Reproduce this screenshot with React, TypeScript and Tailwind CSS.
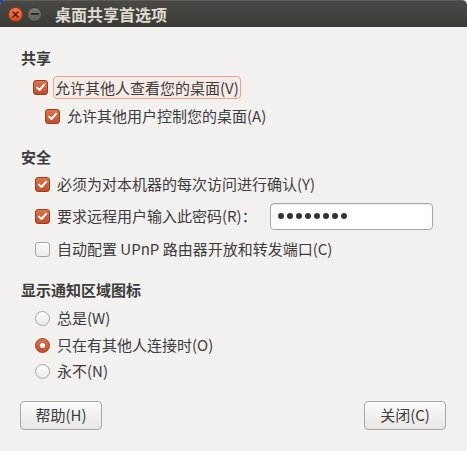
import React from "react";

const font = { fontFamily: '"Noto Sans CJK SC", "Noto Sans", sans-serif' };

function CheckBox({ checked }: { checked: boolean }) {
  if (!checked) {
    return (
      <span className="inline-block w-[15px] h-[15px] rounded-[3px] border border-[#a8a6a2] bg-gradient-to-b from-[#fdfdfc] to-[#eceae7] shrink-0" />
    );
  }
  return (
    <span className="inline-flex items-center justify-center w-[15px] h-[15px] rounded-[3px] border border-[#9a3e1f] bg-gradient-to-b from-[#dd7450] to-[#c04e2d] shrink-0">
      <svg width="11" height="11" viewBox="0 0 11 11">
        <path d="M2 5.6 L4.5 8 L9 2.8" fill="none" stroke="#fff" strokeWidth="2" strokeLinecap="round" strokeLinejoin="round" />
      </svg>
    </span>
  );
}

function Radio({ checked }: { checked: boolean }) {
  if (!checked) {
    return (
      <span className="inline-block w-[15px] h-[15px] rounded-full border border-[#a8a6a2] bg-gradient-to-b from-[#fdfdfc] to-[#eceae7] shrink-0" />
    );
  }
  return (
    <span className="inline-flex items-center justify-center w-[15px] h-[15px] rounded-full border border-[#9a3e1f] bg-gradient-to-b from-[#dd7450] to-[#c04e2d] shrink-0">
      <span className="w-[5px] h-[5px] rounded-full bg-white" />
    </span>
  );
}

export default function App() {
  return (
    <div style={font} className="w-[467px] h-[451px] bg-[#f2f1f0] text-[#3c3c3c] text-[15px] relative overflow-hidden">
      {/* title bar */}
      <div className="h-[27px] bg-gradient-to-b from-[#4a4944] to-[#3b3a36] border-t border-[#5d5c57] rounded-t-[5px] flex items-center">
        <div className="ml-[8px] w-[15px] h-[15px] rounded-full bg-gradient-to-b from-[#f47b55] to-[#dc4a1e] border border-[#8f3516] flex items-center justify-center">
          <svg width="7" height="7" viewBox="0 0 7 7">
            <path d="M1 1 L6 6 M6 1 L1 6" stroke="#3a1a10" strokeWidth="1.4" strokeLinecap="round" />
          </svg>
        </div>
        <div className="ml-[4px] w-[15px] h-[15px] rounded-full bg-gradient-to-b from-[#7d7c77] to-[#5e5d58] border border-[#3a3935] flex items-center justify-center">
          <span className="w-[8px] h-[1.5px] bg-[#2e2d2a]" />
        </div>
        <span className="ml-[13px] text-[16px] font-bold text-[#dfdbd2] leading-none">桌面共享首选项</span>
      </div>
      <div className="absolute left-0 top-0 w-[3px] h-[3px] bg-[#2a3fb0]" />

      <div className="pl-[21px] pr-[21px] flex flex-col">
        {/* 共享 */}
        <div className="mt-[21px] h-[20px] leading-[20px] font-bold">共享</div>
        <div className="mt-[7px] h-[24px] flex items-center pl-[12px]">
          <CheckBox checked />
          <span className="ml-[5px] h-[23px] leading-[21px] px-[1px] border border-[#e9a58a] bg-[#f6ebe6] rounded-[4px]">允许其他人查看您的桌面(V)</span>
        </div>
        <div className="mt-[5px] h-[24px] flex items-center pl-[24px]">
          <CheckBox checked />
          <span className="ml-[7px]">允许其他用户控制您的桌面(A)</span>
        </div>

        {/* 安全 */}
        <div className="mt-[19px] h-[20px] leading-[20px] font-bold">安全</div>
        <div className="mt-[5px] h-[24px] flex items-center pl-[14px]">
          <CheckBox checked />
          <span className="ml-[7px]">必须为对本机器的每次访问进行确认(Y)</span>
        </div>
        <div className="mt-[6px] h-[28px] flex items-center pl-[14px]">
          <CheckBox checked />
          <span className="ml-[7px]">要求远程用户输入此密码(R)：</span>
          <div className="ml-auto w-[163px] h-[27px] rounded-[4px] border border-[#a9a7a3] bg-white flex items-center pl-[7px] gap-[3px] shadow-[inset_0_1px_1px_rgba(0,0,0,0.08)] mr-[13px]">
            {Array.from({ length: 8 }).map((_, i) => (
              <span key={i} className="w-[6px] h-[6px] rounded-full bg-[#333333]" />
            ))}
          </div>
        </div>
        <div className="mt-[7px] h-[24px] flex items-center pl-[14px]">
          <CheckBox checked={false} />
          <span className="ml-[7px]">自动配置 UPnP 路由器开放和转发端口(C)</span>
        </div>

        {/* 显示通知区域图标 */}
        <div className="mt-[19px] h-[20px] leading-[20px] font-bold">显示通知区域图标</div>
        <div className="mt-[6px] h-[24px] flex items-center pl-[14px]">
          <Radio checked={false} />
          <span className="ml-[7px]">总是(W)</span>
        </div>
        <div className="mt-[3px] h-[24px] flex items-center pl-[14px]">
          <Radio checked />
          <span className="ml-[7px]">只在有其他人连接时(O)</span>
        </div>
        <div className="mt-[2px] h-[24px] flex items-center pl-[14px]">
          <Radio checked={false} />
          <span className="ml-[7px]">永不(N)</span>
        </div>

        {/* buttons */}
        <div className="mt-[18px] flex justify-between">
          <button className="w-[82px] h-[29px] rounded-[4px] border border-[#a9a7a3] bg-gradient-to-b from-[#fbfbfa] to-[#e8e6e3] text-[15px] text-[#3c3c3c] -ml-[1px]">帮助(H)</button>
          <button className="w-[82px] h-[29px] rounded-[4px] border border-[#a9a7a3] bg-gradient-to-b from-[#fbfbfa] to-[#e8e6e3] text-[15px] text-[#3c3c3c]">关闭(C)</button>
        </div>
      </div>
    </div>
  );
}
